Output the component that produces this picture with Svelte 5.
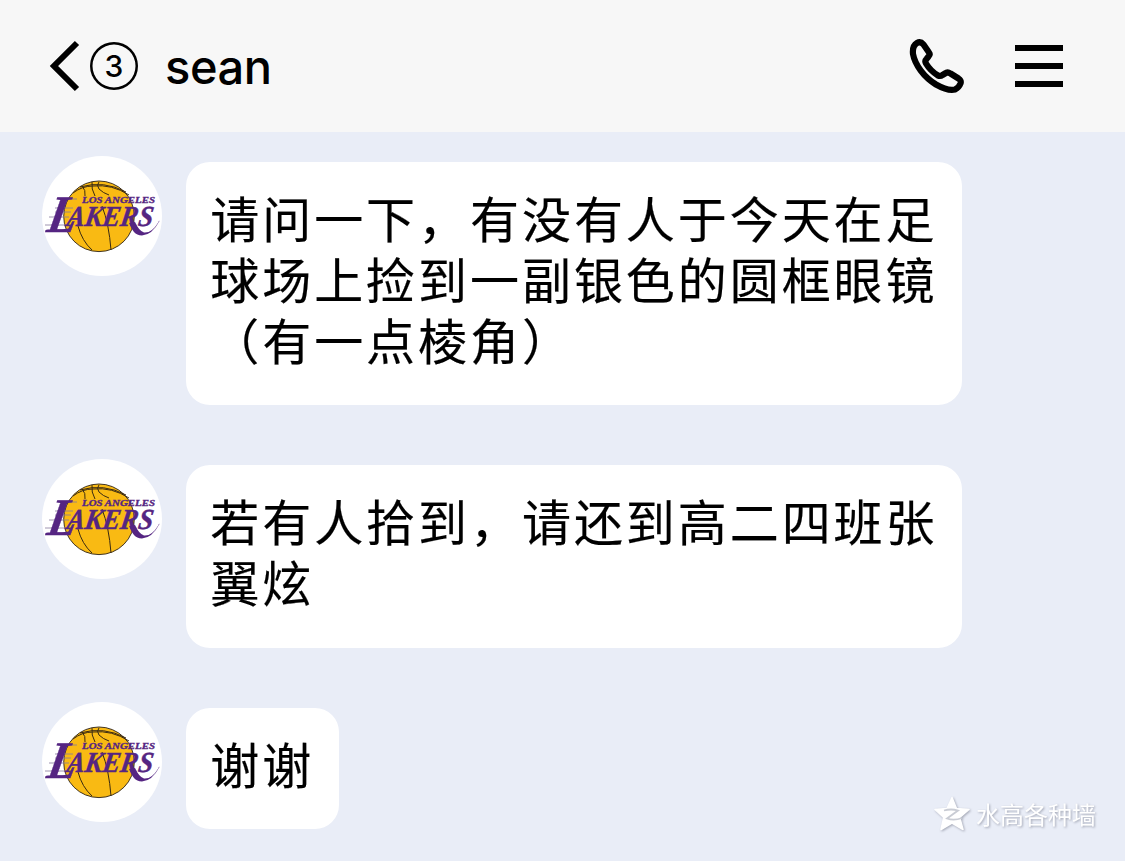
<script>
  const messages = [
    ['请问一下，有没有人于今天在足', '球场上捡到一副银色的圆框眼镜', '（有一点棱角）'],
    ['若有人拾到，请还到高二四班张', '翼炫'],
    ['谢谢'],
  ];
</script>

<div class="screen">
  <header>
    <svg class="back" width="32" height="52" viewBox="0 0 32 52"><path d="M29 3 6 26 29 49" /></svg>
    <span class="count">3</span>
    <h1>sean</h1>
    <svg class="phone" width="58" height="58" viewBox="0 0 58 58">
      <path d="M8 6C4.500 8 3.500 12 4 17C6 28 15 40 27 47.500C35 52 42 53.500 46 52.500Q50 50.500 51.500 46.500Q52.500 43.500 49.500 41.500L41.500 36.500Q38.500 34.500 36 36.500L33.500 38Q31.500 39.500 29 38.500Q21.500 34 17 26.500Q15.500 24 17.500 22L19.500 19.500Q21.500 17.500 20 15.500L14.500 7.500Q11.500 4 8 6Z" />
    </svg>
    <div class="menu"><i></i><i></i><i></i></div>
  </header>

  <main>
    {#each messages as lines}
      <div class="row">
        <svg class="avatar" viewBox="10 10 120 120">
          <circle cx="70" cy="70" r="60" fill="#fff" />
          <circle cx="67" cy="70.300" r="35.300" fill="#f9ba13" stroke="#2b2014" stroke-width="0.900" />
          <g class="seams">
            <path d="M41 47Q50 40 61 40Q80 38 97 49M48 41Q72 34 94 46" />
            <path d="M50 40Q54 44 53 50M60 36Q59 43 63 50M67 36Q64 39 67 43Q71 47 77 49" />
            <path d="M70 60Q77 78 79 104M46 80Q50 95 60 104" />
          </g>
          <g class="speed"><path d="M29 53H45M23 62H41M23 66H39M17 71H37M13 79H33" /></g>
          <g class="word">
            <text class="small" x="50" y="57.200" font-size="8" textLength="73" lengthAdjust="spacingAndGlyphs">LOS ANGELES</text>
            <text class="big" transform="translate(13.500 86) skewX(-11)" font-size="53" textLength="29" lengthAdjust="spacingAndGlyphs">L</text>
            <text class="big" transform="translate(34 80) skewX(-9)" font-size="29" textLength="86" lengthAdjust="spacingAndGlyphs">AKERS</text>
          </g>
          <path class="swash" d="M97 77C100 84 103 89.500 110 89.500Q120 89 127.500 75Q127 74 126.500 76Q120 87.200 112 86.500Q107 85 103 76Z" />
        </svg>
        <div class="bubble">
          {#each lines as line}<p>{line}</p>{/each}
        </div>
      </div>
    {/each}
  </main>

  <footer>
    <svg width="38" height="38" viewBox="0 0 38 38">
      <path d="M18 2.500 22.500 13.500 35 14.500 25.700 22.500 29 34.500 18 28 7 34.500 9.700 22.500 1 14.500 13 13.500Z" fill="#fff" stroke="#fff" stroke-width="1.500" stroke-linejoin="round" />
      <path d="M10 15.500Q17 13.500 24 15.500L13 23.500Q20 26 28 23" fill="none" stroke="#c9ccd4" stroke-width="1.800" />
    </svg>
    <span>水高各种墙</span>
  </footer>
</div>

<style>
  :global(body) { margin: 0; background: #e9edf7; }
  .screen {
    position: relative;
    width: 1125px;
    height: 861px;
    overflow: hidden;
    background: #e9edf7;
    color: #000;
    font-family: "Noto Sans CJK SC", sans-serif;
  }
  header {
    display: flex;
    align-items: center;
    box-sizing: border-box;
    height: 132px;
    padding: 0 62px 0 48px;
    background: #f7f7f7;
  }
  .back { fill: none; stroke: #000; stroke-width: 6; }
  .count {
    width: 48px;
    height: 48px;
    margin-left: 10px;
    border-radius: 50%;
    box-shadow: inset 0 0 0 2.500px #000;
    font: 450 30px/49px Inter, sans-serif;
    text-align: center;
  }
  h1 {
    margin: 2px auto 0 27px;
    font: 500 47px/60px Inter, sans-serif;
    letter-spacing: -0.400px;
  }
  .phone { fill: none; stroke: #000; stroke-width: 6.200; stroke-linejoin: round; margin-right: 48px; }
  .menu { display: grid; gap: 12px; width: 48px; }
  .menu i { height: 6px; background: #000; }
  main {
    display: flex;
    flex-direction: column;
    gap: 54px;
    padding: 24px 42px;
  }
  .row { display: flex; align-items: flex-start; gap: 24px; }
  .avatar { width: 120px; height: 120px; flex: none; overflow: visible; }
  .seams { fill: none; stroke: #3a2a12; stroke-width: 1; }
  .speed { stroke: #87799c; stroke-width: 0.800; }
  .word {
    fill: #552582;
    font-family: "Liberation Serif", serif;
    font-weight: 700;
    font-style: italic;
  }
  .small { stroke: #552582; stroke-width: 0.300; }
  .big { stroke: #552582; stroke-width: 0.400; }
  .swash { fill: #552582; }
  .bubble {
    margin-top: 6px;
    padding: 24px 24.900px 36.400px 24.300px;
    border-radius: 24px;
    background: #fff;
  }
  p {
    margin: 0;
    font-size: 49px;
    line-height: 61px;
    letter-spacing: 2.940px;
    white-space: nowrap;
    text-spacing-trim: space-all;
    -webkit-text-stroke: 0.200px #000;
  }
  footer {
    position: absolute;
    right: 29px;
    bottom: 28px;
    display: flex;
    align-items: center;
    gap: 4px;
    color: #fff;
    font-size: 24px;
    line-height: 36px;
    filter: drop-shadow(1px 1px 1px #a4a8b6);
  }
</style>
